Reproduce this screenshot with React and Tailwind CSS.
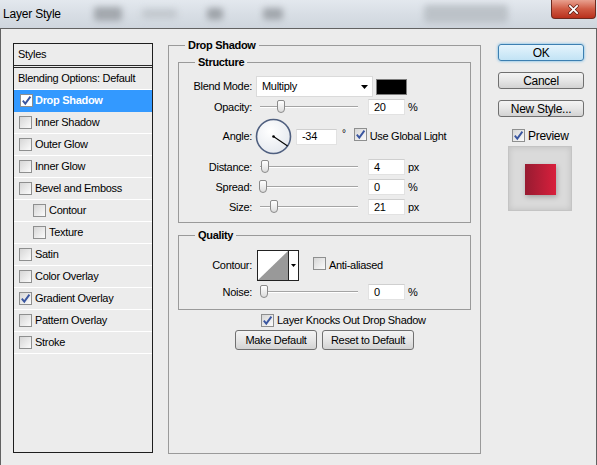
import React from 'react';

const Check = ({ checked, onBlue }) => (
  <span
    className={`inline-flex h-[13px] w-[13px] shrink-0 items-center justify-center border border-[#8e8f8f] ${
      onBlue ? 'bg-white' : 'bg-gradient-to-br from-[#d6d6d6] to-[#fbfbfb]'
    }`}
  >
    {checked && (
      <svg viewBox="0 0 11 11" className="h-[11px] w-[11px]">
        <path d="M1.8 5.6 L4.3 8.6 L9.4 1.6" stroke="#3a56a0" strokeWidth="1.9" fill="none" />
      </svg>
    )}
  </span>
);

const Slider = ({ thumb }) => (
  <div className="relative ml-[8px] h-[16px] w-[98px] shrink-0">
    <div className="absolute left-0 right-0 top-[7px] h-[2px] border-t border-b border-t-[#a4a4a4] border-b-white" />
    <div className={`absolute top-[1px] h-[13px] w-[8px] rounded-t-[2px] rounded-b-[4px] border border-[#8a8a8a] bg-gradient-to-b from-white to-[#dcdcdc] ${thumb}`} />
  </div>
);

const Field = ({ value, w = 'w-[37px]', ml = 'ml-[10px]' }) => (
  <div className={`${ml} ${w} flex h-[16px] shrink-0 items-center border border-[#e2e2e2] border-t-[#cfcfcf] bg-white pl-[5px]`}>
    {value}
  </div>
);

const Label = ({ children }) => (
  <span className="w-[73px] shrink-0 text-right">{children}</span>
);

const Btn = ({ children, w, primary, cls = '' }) => (
  <div
    className={`flex h-[17px] items-center justify-center rounded-[3px] border ${
      primary
        ? 'border-[#3c7fb1] bg-gradient-to-b from-[#e5f4fc] to-[#c2e3f5] shadow-[0_0_3px_#5fb2e6]'
        : 'border-[#707070] bg-gradient-to-b from-[#f4f4f4] via-[#e6e6e6] to-[#d3d3d3]'
    } ${w} ${cls}`}
  >
    {children}
  </div>
);

const styleRows = [
  { name: 'Drop Shadow', checked: true, active: true },
  { name: 'Inner Shadow' },
  { name: 'Outer Glow' },
  { name: 'Inner Glow' },
  { name: 'Bevel and Emboss' },
  { name: 'Contour', sub: true },
  { name: 'Texture', sub: true },
  { name: 'Satin' },
  { name: 'Color Overlay' },
  { name: 'Gradient Overlay', checked: true },
  { name: 'Pattern Overlay' },
  { name: 'Stroke' },
];

function TitleBar() {
  return (
    <div className="flex h-[28px] shrink-0 items-center bg-gradient-to-b from-[#e3e8ee] via-[#d8dee5] to-[#cfd6de]">
      <span className="w-[94px] shrink-0 pl-[3px] text-[12px] tracking-[-0.2px] text-black">Layer Style</span>
      <span className="h-[14px] w-[28px] shrink-0 rounded-[3px] bg-[#a3a8ae] blur-[3px]" />
      <span className="ml-[20px] h-[10px] w-[35px] shrink-0 rounded-[3px] bg-[#c3c9cf] blur-[3px]" />
      <span className="ml-[30px] h-[12px] w-[16px] shrink-0 rounded-[3px] bg-[#9fa4aa] blur-[3px]" />
      <span className="ml-[40px] h-[12px] w-[20px] shrink-0 rounded-[3px] bg-[#a2a7ad] blur-[3px]" />
      <span className="ml-[141px] h-[18px] w-[84px] shrink-0 rounded-[4px] bg-[#bcc2c8] blur-[3px]" />
      <div className="flex-1" />
      <div className="mr-[1px] flex h-[19px] w-[45px] items-center justify-center self-start rounded-b-[4px] border border-t-0 border-[#6d2a1f] bg-gradient-to-b from-[#e8a08f] via-[#cf5a43] to-[#b9301c]">
        <svg viewBox="0 0 14 12" className="h-[11px] w-[13px]">
          <path d="M3 2 L11 10 M11 2 L3 10" stroke="#5a1a10" strokeWidth="3.4" strokeLinecap="round" />
          <path d="M3 2 L11 10 M11 2 L3 10" stroke="#ffffff" strokeWidth="2" strokeLinecap="round" />
        </svg>
      </div>
    </div>
  );
}

function StylesPanel() {
  return (
    <div className="ml-[12px] mt-[14px] h-[410px] w-[140px] shrink-0 border border-[#1e1e1e]">
      <div className="flex h-[21px] items-center pl-[4px]">Styles</div>
      <div className="h-[3px] border-y border-[#2a2a2a]" />
      <div className="flex h-[22px] items-center border-b border-white pl-[4px]">Blending Options: Default</div>
      {styleRows.map((r) => (
        <div
          key={r.name}
          className={`flex h-[22px] items-center border-b ${
            r.active ? 'border-[#3399ff] bg-[#3399ff] pl-[6px] font-bold text-white' : 'border-white'
          } ${!r.active && (r.sub ? 'pl-[19px]' : 'pl-[5px]')}`}
        >
          <Check checked={r.checked} onBlue={r.active} />
          <span className={r.active ? 'ml-[2px]' : 'ml-[3px]'}>{r.name}</span>
        </div>
      ))}
    </div>
  );
}

function DropShadowPanel() {
  return (
    <fieldset className="ml-[15px] mt-[9px] h-[416px] w-[313px] shrink-0 border border-[#9a9a9a]">
      <legend className="ml-[16px] px-[3px] font-bold leading-[14px]">Drop Shadow</legend>

      <fieldset className="mx-[9px] mt-[3px] h-[168px] border border-[#9a9a9a]">
        <legend className="ml-[16px] px-[3px] font-bold leading-[14px]">Structure</legend>

        <div className="mt-[7px] flex h-[21px] items-center">
          <Label>Blend Mode:</Label>
          <div className="ml-[4px] flex h-[21px] w-[117px] items-center justify-between border border-[#dadada] bg-white pl-[5px] pr-[4px]">
            <span>Multiply</span>
            <svg viewBox="0 0 7 4" className="h-[4px] w-[7px]">
              <path d="M0 0 H7 L3.5 4 Z" fill="#000" />
            </svg>
          </div>
          <div className="ml-[3px] h-[16px] w-[31px] border border-[#7d7d7d] bg-black" />
        </div>

        <div className="mt-[2px] flex h-[16px] items-center">
          <Label>Opacity:</Label>
          <Slider thumb="left-[17px]" />
          <Field value="20" />
          <span className="ml-[3px]">%</span>
        </div>

        <div className="mt-[3px] flex h-[37px] items-center">
          <Label>Angle:</Label>
          <svg viewBox="0 0 37 37" className="ml-[3px] h-[37px] w-[37px] shrink-0">
            <defs>
              <radialGradient id="dial" cx="0.4" cy="0.35" r="0.7">
                <stop offset="0" stopColor="#ffffff" />
                <stop offset="1" stopColor="#e4e8ee" />
              </radialGradient>
            </defs>
            <circle cx="18.5" cy="18.5" r="17" fill="url(#dial)" stroke="#4f5f7f" strokeWidth="1.6" />
            <circle cx="18.5" cy="18.5" r="1.3" fill="#000" />
            <path d="M18.5 18.5 L32.6 28" stroke="#000" strokeWidth="1.1" />
          </svg>
          <Field value="-34" w="w-[41px]" ml="ml-[4px]" />
          <span className="ml-[5px] self-start pt-[11px] text-[10px] leading-[10px]">°</span>
          <span className="ml-[8px]"><Check checked /></span>
          <span className="ml-[3px]">Use Global Light</span>
        </div>

        <div className="mt-[4px] flex h-[16px] items-center">
          <Label>Distance:</Label>
          <Slider thumb="left-[1px]" />
          <Field value="4" />
          <span className="ml-[3px]">px</span>
        </div>

        <div className="mt-[4px] flex h-[16px] items-center">
          <Label>Spread:</Label>
          <Slider thumb="left-[-1px]" />
          <Field value="0" />
          <span className="ml-[3px]">%</span>
        </div>

        <div className="mt-[4px] flex h-[16px] items-center">
          <Label>Size:</Label>
          <Slider thumb="left-[10px]" />
          <Field value="21" />
          <span className="ml-[3px]">px</span>
        </div>
      </fieldset>

      <fieldset className="mx-[9px] mt-[5px] h-[82px] border border-[#9a9a9a]">
        <legend className="ml-[16px] px-[3px] font-bold leading-[14px]">Quality</legend>

        <div className="mt-[8px] flex h-[31px] items-center">
          <Label>Contour:</Label>
          <div className="ml-[5px] flex h-[31px] w-[42px] shrink-0 border border-[#222]">
            <svg viewBox="0 0 30 29" className="h-[29px] w-[30px]" preserveAspectRatio="none">
              <rect width="30" height="29" fill="#fff" />
              <path d="M0 29 L30 0 L30 29 Z" fill="#999" />
            </svg>
            <div className="flex flex-1 items-center justify-center border-l border-[#222] bg-white">
              <svg viewBox="0 0 5 3" className="h-[3px] w-[5px]">
                <path d="M0 0 H5 L2.5 3 Z" fill="#000" />
              </svg>
            </div>
          </div>
          <span className="ml-[14px]"><Check /></span>
          <span className="ml-[3px]">Anti-aliased</span>
        </div>

        <div className="mt-[3px] flex h-[16px] items-center">
          <Label>Noise:</Label>
          <Slider thumb="left-[0px]" />
          <Field value="0" />
          <span className="ml-[3px]">%</span>
        </div>
      </fieldset>

      <div className="ml-[92px] mt-[4px] flex h-[13px] items-center">
        <Check checked />
        <span className="ml-[3px]">Layer Knocks Out Drop Shadow</span>
      </div>

      <div className="ml-[66px] mt-[3px] flex">
        <Btn w="w-[82px]" cls="h-[20px]">Make Default</Btn>
        <Btn w="w-[92px]" cls="ml-[5px] h-[20px]">Reset to Default</Btn>
      </div>
    </fieldset>
  );
}

function ActionsPanel() {
  return (
    <div className="ml-[17px] mt-[15px] flex w-[86px] shrink-0 flex-col text-[12px]">
      <Btn primary w="w-[86px]">OK</Btn>
      <Btn w="w-[86px]" cls="mt-[11px]">Cancel</Btn>
      <Btn w="w-[86px]" cls="mt-[11px]">New Style...</Btn>
      <div className="mt-[12px] flex h-[13px] items-center pl-[14px]">
        <Check checked />
        <span className="ml-[3px]">Preview</span>
      </div>
      <div className="ml-[10px] mt-[4px] h-[65px] w-[64px] border border-[#c4c4c4] bg-[#dadada] pl-[16px] pt-[17px] shadow-[inset_0_0_6px_rgba(0,0,0,0.12)]">
        <div className="h-[31px] w-[31px] bg-gradient-to-r from-[#971b31] to-[#d91f3c] shadow-[1px_2px_5px_rgba(0,0,0,0.25)]" />
      </div>
    </div>
  );
}

export default function App() {
  return (
    <div className="flex h-[465px] w-[597px] flex-col overflow-hidden bg-[#ececec] font-['Liberation_Sans',Arial,sans-serif] text-[11px] tracking-[-0.3px] text-black">
      <TitleBar />
      <div className="flex flex-1 items-start border-x border-t border-[#626262]">
        <StylesPanel />
        <DropShadowPanel />
        <ActionsPanel />
      </div>
    </div>
  );
}
